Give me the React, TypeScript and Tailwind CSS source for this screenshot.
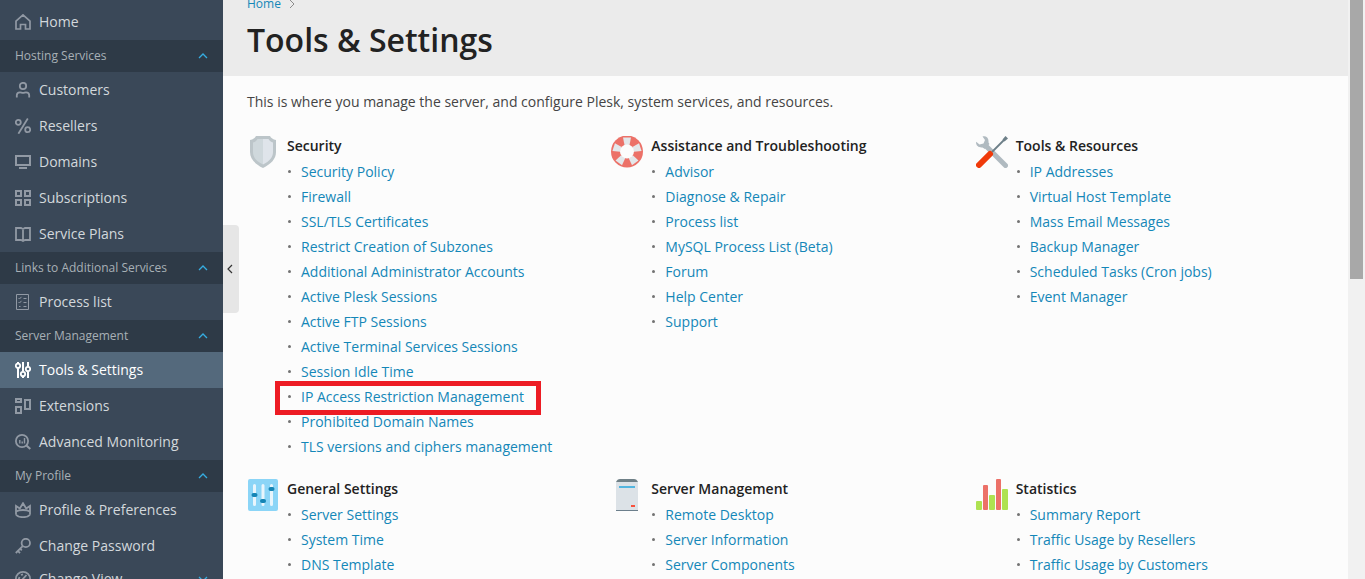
import type { ReactNode } from "react";

const NAV_ICONS: Record<string, ReactNode> = {
  home: <path d="M1 7.2 8 .9l7 6.3V15h-4.5v-4.5h-5V15H1z" strokeWidth="1.7" />,
  user: (
    <>
      <circle cx="8" cy="4" r="3.2" />
      <path d="M1.8 15.5v-2.2c0-1.8 1.4-3 3.2-3 1.2 0 1.6.6 3 .6s1.8-.6 3-.6c1.8 0 3.2 1.2 3.2 3v2.2" />
    </>
  ),
  percent: (
    <>
      <circle cx="3.3" cy="4.3" r="2.5" />
      <circle cx="12.7" cy="11.7" r="2.5" />
      <path d="M12.8.5 3.4 15.7" />
    </>
  ),
  monitor: (
    <>
      <path d="M1 2h14v9H1z" strokeWidth="2" />
      <path d="M4 14h8" strokeWidth="2" />
    </>
  ),
  grid: <path d="M1 1h5v5H1zM10 1h5v5h-5zM1 10h5v5H1zM10 10h5v5h-5z" strokeWidth="2" />,
  book: <path d="M1 2h5l2 1 2-1h5v12h-5l-2 1-2-1H1zM8 3v12" />,
  checklist: (
    <>
      <path d="M1.5.5h12v15h-12z" strokeWidth="1" />
      <path d="m3.5 4 1 1 2-2.2M3.5 8l1 1 2-2.2M8.5 4.5h3M8.5 8.5h3M8.5 12.5h3M4 12.5h1.5" strokeWidth="1" />
    </>
  ),
  sliders: (
    <>
      <path d="M3 0v1.5M3 6v10M8 0v9.5M8 14.5V16M13 0v4.5M13 9.5V16" strokeWidth="2" />
      <circle cx="3" cy="3.8" r="2.2" />
      <circle cx="8" cy="12" r="2.2" />
      <circle cx="13" cy="7" r="2.2" />
    </>
  ),
  blocks: <path d="M1 1h5v3H1zM1 9h5v6H1zM10 2h5v9h-5z" strokeWidth="2" />,
  analytics: (
    <>
      <circle cx="7" cy="7" r="6.1" />
      <path d="m11.5 11.5 3.8 3.5" strokeWidth="2.2" />
      <path d="M4.8 6v3.5M7.2 7.5v2M9.5 4v5.5" strokeWidth="1.4" />
    </>
  ),
  crown: (
    <>
      <path d="M1 12.8V4l3.8 2.5L8 1.2l3.2 5.3L15 4v8.8" />
      <path d="M1 9.5C3 8.3 5.500 8 8 8s5 .3 7 1.5" />
      <path d="M1 12.8C3 14.6 5.500 15.2 8 15.2s5-.6 7-2.4" />
    </>
  ),
  key: (
    <>
      <circle cx="10.8" cy="5" r="4.2" />
      <path d="M7.7 8.2.8 15M2.5 12.5l2.5 2.6M5 10.5l1.800 1.8" />
    </>
  ),
  gauge: (
    <>
      <circle cx="8" cy="8" r="7.1" />
      <path d="m6.5 9.5 5-5.5M3.5 9l1-3M6 4l2-.7" />
    </>
  ),
};

const NAV = [
  { title: "", items: [{ label: "Home", icon: "home" }] },
  {
    title: "Hosting Services",
    items: [
      { label: "Customers", icon: "user" },
      { label: "Resellers", icon: "percent" },
      { label: "Domains", icon: "monitor" },
      { label: "Subscriptions", icon: "grid" },
      { label: "Service Plans", icon: "book" },
    ],
  },
  { title: "Links to Additional Services", items: [{ label: "Process list", icon: "checklist" }] },
  {
    title: "Server Management",
    items: [
      { label: "Tools & Settings", icon: "sliders" },
      { label: "Extensions", icon: "blocks" },
      { label: "Advanced Monitoring", icon: "analytics" },
    ],
  },
  {
    title: "My Profile",
    items: [
      { label: "Profile & Preferences", icon: "crown" },
      { label: "Change Password", icon: "key" },
      { label: "Change View", icon: "gauge", expandable: true },
    ],
  },
];

const ACTIVE = "Tools & Settings";
const HIGHLIGHTED = "IP Access Restriction Management";

const SECTIONS = [
  {
    title: "Security",
    icon: (
      <>
        <path d="M9 0h14c1 2 3 3.5 6 4v12c0 7-5 12-13 16C8 28 3 23 3 16V4c3-.5 5-2 6-4z" fill="#bcc5c9" />
        <path d="M16 3h-5.500C9.5 5 8 6 6 6.5V16c0 5.5 3.5 9.2 10 12.5z" fill="#cfd8dc" />
        <path d="M16 3h5.500c1 2 2.500 3 4.500 3.500V16c0 5.500-3.500 9.200-10 12.500z" fill="#dfe4ea" />
      </>
    ),
    links: [
      "Security Policy",
      "Firewall",
      "SSL/TLS Certificates",
      "Restrict Creation of Subzones",
      "Additional Administrator Accounts",
      "Active Plesk Sessions",
      "Active FTP Sessions",
      "Active Terminal Services Sessions",
      "Session Idle Time",
      "IP Access Restriction Management",
      "Prohibited Domain Names",
      "TLS versions and ciphers management",
    ],
  },
  {
    title: "Assistance and Troubleshooting",
    icon: (
      <>
        <circle cx="16" cy="15.5" r="16" fill="#ec7168" />
        <g fill="#e3e7ea">
          <path d="M12 1.5h8L18.500 9h-5z" />
          <path d="M12 1.5h8L18.500 9h-5z" transform="rotate(72 16 15.5)" />
          <path d="M12 1.5h8L18.500 9h-5z" transform="rotate(144 16 15.5)" />
          <path d="M12 1.5h8L18.500 9h-5z" transform="rotate(216 16 15.5)" />
          <path d="M12 1.5h8L18.500 9h-5z" transform="rotate(288 16 15.5)" />
        </g>
        <circle cx="16" cy="15.5" r="7" fill="#fcfcfc" />
      </>
    ),
    links: [
      "Advisor",
      "Diagnose & Repair",
      "Process list",
      "MySQL Process List (Beta)",
      "Forum",
      "Help Center",
      "Support",
    ],
  },
  {
    title: "Tools & Resources",
    icon: (
      <>
        <path d="m10 10 19.5 19.5" stroke="#b0bac0" strokeWidth="5" strokeLinecap="round" />
        <path d="M6.500.5c3-1 6 .8 6 4.500 0 1.500 0 2 1 3l-5 5c-1-1-1.500-1.500-3-1.500C2 11.500-.5 9 .2 5.800L3.500 8.500 7.500 7.500 9 4z" fill="#b0bac0" />
        <path d="M16 16 29 3" stroke="#6d7f88" strokeWidth="1.8" />
        <path d="m26.5 3.500 3-3.500L32 2.500 28.500 5.500z" fill="#6d7f88" />
        <path d="M3 29 14 18" stroke="#f03a0a" strokeWidth="6" strokeLinecap="round" />
      </>
    ),
    links: [
      "IP Addresses",
      "Virtual Host Template",
      "Mass Email Messages",
      "Backup Manager",
      "Scheduled Tasks (Cron jobs)",
      "Event Manager",
    ],
  },
  {
    title: "General Settings",
    icon: (
      <>
        <rect x="1" width="30" height="32" rx="2" fill="#8bd5f7" />
        <path d="M7.5 6.5v19M16 6.5v19M24.5 6.5v19" stroke="#e8f5fc" strokeWidth="3" strokeLinecap="round" />
        <g fill="#1585b5">
          <rect x="4.5" y="14" width="6" height="4" rx="2" />
          <rect x="13" y="20" width="6" height="4" rx="2" />
          <rect x="21.5" y="8" width="6" height="4" rx="2" />
        </g>
      </>
    ),
    links: ["Server Settings", "System Time", "DNS Template"],
  },
  {
    title: "Server Management",
    icon: (
      <>
        <path d="M5 3c1-2 2-3 4-3h14c2 0 3 1 4 3z" fill="#6f8087" />
        <path d="M5 3h22v28H5z" fill="#dce2e7" />
        <path d="M5 31h22v1H5z" fill="#6c7f8c" />
        <path d="M8 7h16v2H8z" fill="#52b5df" />
        <path d="M20 26h4v2h-4z" fill="#f9523c" />
      </>
    ),
    links: ["Remote Desktop", "Server Information", "Server Components"],
  },
  {
    title: "Statistics",
    icon: (
      <>
        <g fill="#aee251">
          <rect y="22" width="6" height="9" rx="1" />
          <rect x="13" y="16" width="6" height="15" rx="1" />
          <rect x="26" y="10" width="6" height="21" rx="1" />
        </g>
        <g fill="#ec7168">
          <rect x="7" y="6" width="5" height="25" rx="1" />
          <rect x="20" width="5" height="31" rx="1" />
        </g>
      </>
    ),
    links: ["Summary Report", "Traffic Usage by Resellers", "Traffic Usage by Customers"],
  },
];

function Chevron({ down = false }: { down?: boolean }) {
  return (
    <svg className="w-2.5 h-2.5" viewBox="0 0 10 10" fill="none" stroke="#35ade1" strokeWidth="1.3">
      <path d={down ? "m1 3 4 4 4-4" : "m1 7 4-4 4 4"} />
    </svg>
  );
}

function NavItem({ label, icon, expandable }: { label: string; icon: string; expandable?: boolean }) {
  const active = label === ACTIVE;
  return (
    <a
      href="#"
      className={`flex items-center gap-2 px-[15px] text-[14px] leading-5 ${expandable ? "h-[30px]" : "h-9"} ${
        active ? "bg-[#54697c] text-white" : ""
      }`}
    >
      <svg
        className={`w-4 h-4 shrink-0 ${active ? "text-white" : "text-[#9199a4]"}`}
        viewBox="0 0 16 16"
        fill="none"
        stroke="currentColor"
        strokeWidth="1.8"
      >
        {NAV_ICONS[icon]}
      </svg>
      <span className="flex-1">{label}</span>
      {expandable && <Chevron down />}
    </a>
  );
}

function Sidebar() {
  return (
    <nav className="w-[223px] shrink-0 pt-1 bg-[#3a4858] text-[#d3d8dc]">
      {NAV.map((group) => (
        <div key={group.title}>
          {group.title && (
            <button
              type="button"
              aria-expanded="true"
              className="flex items-center justify-between w-full h-8 px-[15px] bg-[#2e3a47] text-[12px] text-[#a8b0b6]"
            >
              {group.title}
              <Chevron />
            </button>
          )}
          {group.items.map((item) => (
            <NavItem key={item.label} {...item} />
          ))}
        </div>
      ))}
    </nav>
  );
}

function Section({ title, icon, links }: (typeof SECTIONS)[number]) {
  return (
    <section className="flex items-start gap-2">
      <svg className="w-8 h-8 shrink-0" viewBox="0 0 32 32" fill="none">
        {icon}
      </svg>
      <div>
        <h2 className="leading-5 font-semibold text-[#222]">{title}</h2>
        <ul className="mt-[3px]">
          {links.map((link) => (
            <li key={link} className="relative flex items-center h-[25px]">
              <span className="w-[3px] h-[3px] ml-px mr-2.5 rounded-full bg-[#737373]" />
              <a href="#" className="text-[#1487b8] hover:underline">
                {link}
              </a>
              {link === HIGHLIGHTED && (
                <span className="absolute -top-[3px] -left-3 h-[34px] w-[266px] border-5 border-[#ed1c24] pointer-events-none" />
              )}
            </li>
          ))}
        </ul>
      </div>
    </section>
  );
}

export default function App() {
  return (
    <div className="flex h-screen overflow-hidden bg-[#fcfcfc] font-['Open_Sans',sans-serif] text-[14px] text-[#444]">
      <Sidebar />
      <main className="relative flex-1 min-w-0">
        <header className="h-[76px] px-6 bg-[#ebebeb]">
          <div className="flex items-center gap-2 h-2 text-[12px]">
            <a href="#" className="text-[#1487b8]">
              Home
            </a>
            <svg className="w-1.5 h-2.5" viewBox="0 0 6 10" fill="none" stroke="#8c8c8c">
              <path d="m1 1 4 4-4 4" />
            </svg>
          </div>
          <h1 className="pt-3 text-[32px] leading-10 font-semibold text-[#222]">Tools &amp; Settings</h1>
        </header>
        <button
          type="button"
          aria-label="Collapse sidebar"
          className="absolute left-0 top-[225px] flex items-center justify-center w-4 h-[88px] rounded-r bg-[#e6e6e6]"
        >
          <svg className="w-2 h-2.5" viewBox="0 0 8 10" fill="none" stroke="#333" strokeWidth="1.2">
            <path d="M5 1 1 5l4 4" />
          </svg>
        </button>
        <div className="px-6 pt-4">
          <p className="leading-5">
            This is where you manage the server, and configure Plesk, system services, and resources.
          </p>
          <div className="grid grid-cols-3 gap-x-4 gap-y-5 mt-6">
            {SECTIONS.map((section) => (
              <Section key={section.title} {...section} />
            ))}
          </div>
        </div>
      </main>
      <div className="w-[17px] shrink-0 px-0.5 bg-[#f1f1f1]">
        <div className="h-[279px] bg-[#a8a8a8]" />
      </div>
    </div>
  );
}
